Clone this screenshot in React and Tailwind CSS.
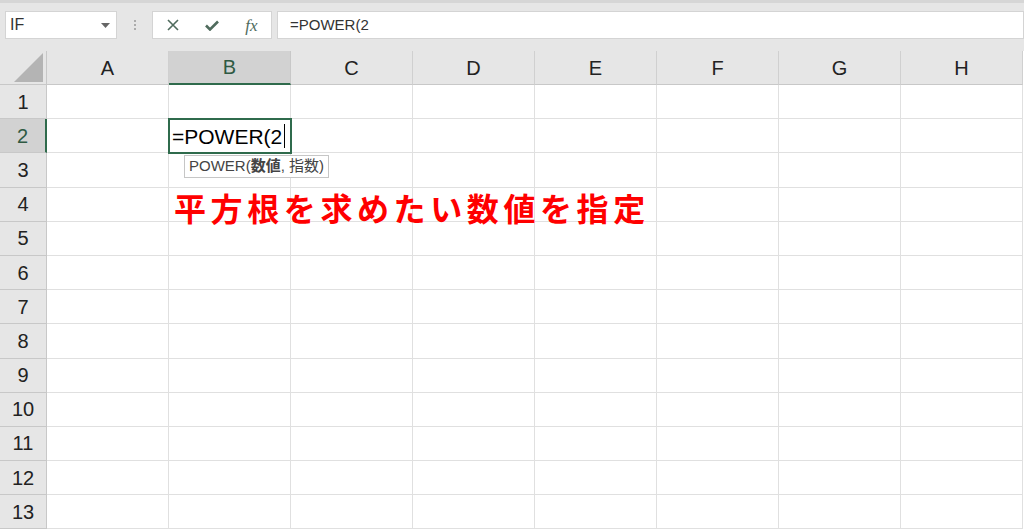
import React from 'react';

const cols = ['A', 'B', 'C', 'D', 'E', 'F', 'G', 'H'];
const rows = [1, 2, 3, 4, 5, 6, 7, 8, 9, 10, 11, 12, 13];

const font = { fontFamily: '"Liberation Sans", "Noto Sans CJK JP", sans-serif' };

const FormulaBar = () => (
  <div className="h-[51px] bg-[#e6e6e6] border-t-[3px] border-[#d6d6d6] flex items-start pt-[8px] pl-[5px]">
    <div className="w-[112px] h-[28px] bg-white border border-[#d4d4d4] flex items-center justify-between pl-[4px] pr-[6px]">
      <span className="text-[16px] text-[#333]">IF</span>
      <svg width="9" height="5" viewBox="0 0 9 5">
        <path d="M0 0h9L4.5 5z" fill="#666" />
      </svg>
    </div>
    <div className="w-[35px] h-[28px] flex flex-col items-center justify-center gap-[2px]">
      <span className="w-[2px] h-[2px] bg-[#999] rounded-full" />
      <span className="w-[2px] h-[2px] bg-[#999] rounded-full" />
      <span className="w-[2px] h-[2px] bg-[#999] rounded-full" />
    </div>
    <div className="w-[120px] h-[28px] bg-white border border-[#d4d4d4] flex items-center">
      <div className="w-[40px] flex justify-center">
        <svg width="12" height="12" viewBox="0 0 12 12">
          <path d="M1 1l10 10M11 1L1 11" stroke="#4f6b5d" strokeWidth="1.6" />
        </svg>
      </div>
      <div className="w-[40px] flex justify-center">
        <svg width="14" height="11" viewBox="0 0 14 11">
          <path d="M1 5.5l4 4L13 1.5" stroke="#4f6b5d" strokeWidth="2.6" fill="none" />
        </svg>
      </div>
      <div className="w-[40px] flex justify-center">
        <span className="text-[17px] italic text-[#4f6b5d] leading-none" style={{ fontFamily: '"Liberation Serif", serif' }}>fx</span>
      </div>
    </div>
    <div className="ml-[5px] flex-1 h-[28px] bg-white border border-[#d4d4d4] flex items-center pl-[12px]">
      <span className="text-[15px] text-[#333]">=POWER(2</span>
    </div>
  </div>
);

const HeaderRow = () => (
  <div className="flex h-[34px]">
    <div className="w-[47px] bg-[#e6e6e6] border-r border-b border-[#c8c8c8] relative shrink-0">
      <svg className="absolute left-[14px] top-[2px]" width="30" height="30" viewBox="0 0 30 30">
        <path d="M0 29H29V0z" fill="#b4b4b4" />
      </svg>
    </div>
    {cols.map((c) => (
      <div
        key={c}
        className={
          c === 'B'
            ? 'w-[122px] shrink-0 bg-[#d2d2d2] border-r border-[#c8c8c8] border-b-2 border-b-[#2f6b4c] flex items-center justify-center text-[20px] text-[#2f5a43]'
            : 'w-[122px] shrink-0 bg-[#e6e6e6] border-r border-b border-[#d0d0d0] border-b-[#c8c8c8] flex items-center justify-center text-[20px] text-[#222]'
        }
      >
        {c}
      </div>
    ))}
  </div>
);

export default function App() {
  return (
    <div className="w-[1024px] h-[530px] overflow-hidden bg-white relative" style={font}>
      <FormulaBar />
      <HeaderRow />
      {rows.map((r) => (
        <div key={r} className="flex h-[34.2px]">
          <div
            className={
              r === 2
                ? 'w-[47px] shrink-0 bg-[#d2d2d2] border-r-2 border-[#2f6b4c] border-b border-b-[#c8c8c8] flex items-center justify-center text-[20px] text-[#2f5a43]'
                : 'w-[47px] shrink-0 bg-[#e6e6e6] border-r border-b border-[#c8c8c8] flex items-center justify-center text-[20px] text-[#222]'
            }
          >
            {r}
          </div>
          {cols.map((c) => (
            <div key={c} className="w-[122px] shrink-0 border-r border-b border-[#e0e0e0] relative">
              {r === 2 && c === 'B' && (
                <div className="absolute -left-[1px] -top-[1px] w-[124px] h-[36px] border-2 border-[#2f6b4c] z-10 flex items-center pl-[2px]">
                  <span className="text-[21px] text-black leading-none">=POWER(2</span>
                  <span className="ml-[2px] w-[1px] h-[24px] bg-black" />
                </div>
              )}
            </div>
          ))}
        </div>
      ))}
      <div className="absolute left-[184px] top-[155px] h-[23px] px-[4px] bg-white border border-[#c6c6c6] flex items-center text-[15px] text-[#444] z-20">
        POWER(<b>数値</b>, 指数)
      </div>
      <div
        className="absolute left-[174px] top-[191px] text-[32px] font-bold text-[#ff0000] tracking-[4.6px] leading-none z-20"
        style={{ fontFamily: '"Noto Sans CJK JP", sans-serif' }}
      >
        平方根を求めたい数値を指定
      </div>
    </div>
  );
}
